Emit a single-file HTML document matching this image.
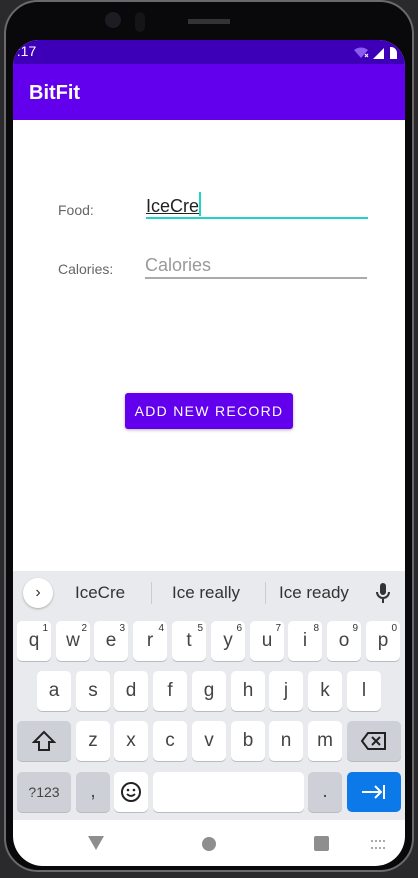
<!DOCTYPE html>
<html><head><style>
body{margin:0;width:418px;height:878px;background:#2a2a2c;position:relative;overflow:hidden;font-family:"Liberation Sans",Roboto,sans-serif}
.a{position:absolute}
.body{left:4px;top:0;width:410px;height:872px;background:#09090b;border-radius:34px;border:2px solid #6a6a6c;box-sizing:border-box}
.screen{left:13px;top:40px;width:392px;height:826px;background:#fff;border-radius:26px 26px 30px 30px;overflow:hidden}
.k{position:absolute;background:#fff;border-radius:5px;box-shadow:0 1px 0 #b8bbc0;font-size:19px;color:#444;text-align:center;line-height:40px;height:40px;width:34px}
.k sup{position:absolute;right:3px;top:-12px;font-size:10px;color:#333}
.g{background:#cdd0d6}
</style></head><body>
<div class="a body"></div>
<div class="a" style="left:105px;top:12px;width:16px;height:16px;border-radius:50%;background:#1c1c22"></div>
<div class="a" style="left:135px;top:12px;width:10px;height:20px;border-radius:5px;background:#151518"></div>
<div class="a" style="left:188px;top:19px;width:42px;height:5px;background:#333"></div>
<div class="a screen">
 <div class="a" style="left:0;top:0;width:392px;height:24px;background:#3d00b8"></div>
 <div class="a" style="left:-4px;top:3px;color:#fff;font-size:14px">7:17</div>
 <svg class="a" style="left:340px;top:6px" width="50" height="14"><path d="M1 4 Q8 -1 15 4 L8 12Z" fill="#8a5cf0"/><path d="M12 8l3 3m0-3l-3 3" stroke="#fff" stroke-width="1.2"/><path d="M20 13L31 2V13Z" fill="#fff"/><path d="M37 1h2a6 6 0 0 1 5 6v6h-7Z" fill="#fff"/></svg>
 <div class="a" style="left:0;top:24px;width:392px;height:56px;background:#6200ee"></div>
 <div class="a" style="left:16px;top:42px;color:#fff;font-size:20px;font-weight:bold">BitFit</div>
 <div class="a" style="left:45px;top:162px;color:#666;font-size:14px">Food:</div>
 <div class="a" style="left:133px;top:156px;color:#222;font-size:18px;text-decoration:underline">IceCre</div>
 <div class="a" style="left:186px;top:152px;width:2px;height:24px;background:#1ed4c8"></div>
 <div class="a" style="left:133px;top:177px;width:222px;height:2px;background:#1ed4c8"></div>
 <div class="a" style="left:45px;top:221px;color:#666;font-size:14px">Calories:</div>
 <div class="a" style="left:132px;top:215px;color:#999;font-size:18px">Calories</div>
 <div class="a" style="left:132px;top:237px;width:222px;height:1.5px;background:#aaa"></div>
 <div class="a" style="left:112px;top:353px;width:168px;height:36px;background:#6200ee;border-radius:3px;color:#fff;font-size:14px;letter-spacing:1.3px;text-align:center;line-height:36px;box-shadow:0 1px 3px rgba(0,0,0,.3)">ADD NEW RECORD</div>
 <div class="a" style="left:0;top:531px;width:392px;height:249px;background:#e8eaed"></div>
 <div class="a" style="left:10px;top:538px;width:30px;height:30px;border-radius:50%;background:#fff;box-shadow:0 1px 2px #aaa;text-align:center;line-height:30px;font-size:16px;color:#333">›</div>
 <div class="a" style="left:62px;top:543px;font-size:17px;color:#333">IceCre</div>
 <div class="a" style="left:138px;top:542px;width:1px;height:22px;background:#ccc"></div>
 <div class="a" style="left:159px;top:543px;font-size:17px;color:#333">Ice really</div>
 <div class="a" style="left:252px;top:542px;width:1px;height:22px;background:#ccc"></div>
 <div class="a" style="left:266px;top:543px;font-size:17px;color:#333">Ice ready</div>
 <svg class="a" style="left:363px;top:543px" width="14" height="20"><rect x="4" y="0" width="6" height="12" rx="3" fill="#333"/><path d="M1 9a6 6 0 0 0 12 0M7 15v5" stroke="#333" stroke-width="2" fill="none"/></svg>
 <div class="k" style="left:4px;top:581px">q<sup>1</sup></div>
 <div class="k" style="left:43px;top:581px">w<sup>2</sup></div>
 <div class="k" style="left:81px;top:581px">e<sup>3</sup></div>
 <div class="k" style="left:120px;top:581px">r<sup>4</sup></div>
 <div class="k" style="left:159px;top:581px">t<sup>5</sup></div>
 <div class="k" style="left:198px;top:581px">y<sup>6</sup></div>
 <div class="k" style="left:237px;top:581px">u<sup>7</sup></div>
 <div class="k" style="left:275px;top:581px">i<sup>8</sup></div>
 <div class="k" style="left:314px;top:581px">o<sup>9</sup></div>
 <div class="k" style="left:353px;top:581px">p<sup>0</sup></div>
 <div class="k" style="left:24px;top:631px">a</div>
 <div class="k" style="left:63px;top:631px">s</div>
 <div class="k" style="left:101px;top:631px">d</div>
 <div class="k" style="left:140px;top:631px">f</div>
 <div class="k" style="left:179px;top:631px">g</div>
 <div class="k" style="left:218px;top:631px">h</div>
 <div class="k" style="left:256px;top:631px">j</div>
 <div class="k" style="left:295px;top:631px">k</div>
 <div class="k" style="left:334px;top:631px">l</div>
 <div class="k g" style="left:4px;top:681px;width:54px"><svg width="24" height="22" style="margin-top:9px"><path d="M12 2L2 12h5v8h10v-8h5Z" fill="none" stroke="#222" stroke-width="2"/></svg></div>
 <div class="k" style="left:63px;top:681px">z</div>
 <div class="k" style="left:101px;top:681px">x</div>
 <div class="k" style="left:140px;top:681px">c</div>
 <div class="k" style="left:179px;top:681px">v</div>
 <div class="k" style="left:218px;top:681px">b</div>
 <div class="k" style="left:256px;top:681px">n</div>
 <div class="k" style="left:295px;top:681px">m</div>
 <div class="k g" style="left:334px;top:681px;width:54px"><svg width="26" height="20" style="margin-top:10px"><path d="M7 2h17v16H7L1 10Z" fill="none" stroke="#222" stroke-width="2"/><path d="M11 6l8 8m0-8l-8 8" stroke="#222" stroke-width="2"/></svg></div>
 <div class="k g" style="left:4px;top:732px;width:54px;font-size:14px">?123</div>
 <div class="k g" style="left:63px;top:732px">,</div>
 <div class="k" style="left:101px;top:732px"><svg width="22" height="22" style="margin-top:9px"><circle cx="11" cy="11" r="9" fill="none" stroke="#222" stroke-width="2"/><circle cx="8" cy="9" r="1.3" fill="#222"/><circle cx="14" cy="9" r="1.3" fill="#222"/><path d="M7 13q4 4 8 0" stroke="#222" stroke-width="1.8" fill="none"/></svg></div>
 <div class="k" style="left:140px;top:732px;width:151px"></div>
 <div class="k g" style="left:295px;top:732px">.</div>
 <div class="k" style="left:334px;top:732px;width:54px;background:#0b7ae8;box-shadow:none"><svg width="26" height="16" style="margin-top:12px"><path d="M1 8h19M14 2l6 6-6 6M23 1v14" stroke="#fff" stroke-width="2" fill="none"/></svg></div>
 <svg class="a" style="left:75px;top:796px" width="18" height="14"><path d="M0 0h16L8 14Z" fill="#8e8e8e"/></svg>
 <div class="a" style="left:189px;top:797px;width:14px;height:14px;border-radius:50%;background:#8e8e8e"></div>
 <div class="a" style="left:301px;top:796px;width:15px;height:15px;border-radius:2px;background:#8e8e8e"></div>
 <div class="a" style="left:358px;top:800px;width:14px;height:5px;border-top:2px dotted #aaa;border-bottom:2px dotted #aaa"></div>
</div>
</body></html>
